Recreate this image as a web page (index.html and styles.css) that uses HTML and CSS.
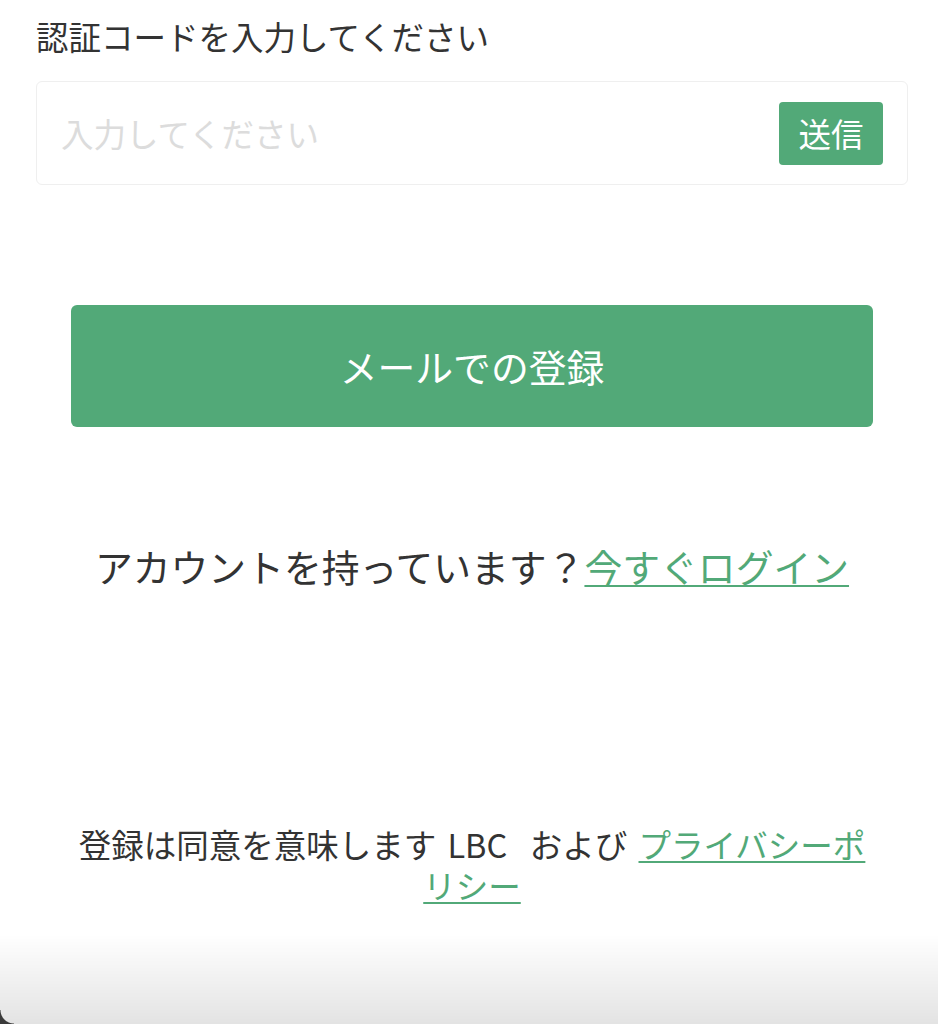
FILE: index.html
```html
<!DOCTYPE html>
<html lang="ja">
<head>
<meta charset="utf-8">
<title>登録</title>
<link rel="stylesheet" href="styles.css">
</head>
<body>
<main class="page">
  <div class="label">認証コードを入力してください</div>
  <div class="code-field">
    <span class="placeholder">入力してください</span>
    <button class="send-btn" type="button">送信</button>
  </div>
  <button class="register-btn" type="button">メールでの登録</button>
  <p class="account">アカウントを持っています？<a class="link" href="#">今すぐログイン </a></p>
  <p class="terms">登録は同意を意味します LBC&nbsp; および <a class="link" href="#">プライバシーポリシー</a></p>
</main>
<div class="bottom-shade"></div>
<div class="corner"></div>
</body>
</html>
```

FILE: styles.css
```css
html, body {
  margin: 0;
  padding: 0;
  background: #ffffff;
}

body {
  font-family: "Noto Sans CJK JP", "Noto Sans", sans-serif;
  color: #333333;
  width: 938px;
  height: 1024px;
  overflow: hidden;
}

.page {
  padding: 0 30px 0 36px;
}

.label {
  margin-top: 12px;
  font-size: 32.5px;
  line-height: 48px;
  color: #333333;
}

.code-field {
  margin-top: 21px;
  height: 104px;
  box-sizing: border-box;
  border: 1px solid #efefef;
  border-radius: 6px;
  display: flex;
  align-items: center;
  justify-content: space-between;
  padding: 0 24px 0 24px;
}

.placeholder {
  font-size: 32.5px;
  line-height: 48px;
  color: #dcdcdc;
}

.send-btn {
  width: 104px;
  height: 63px;
  border: none;
  border-radius: 4px;
  background: #52a978;
  color: #ffffff;
  font-family: inherit;
  font-size: 32.5px;
  line-height: 1;
  padding: 0;
}

.register-btn {
  display: block;
  box-sizing: border-box;
  width: calc(100% - 70px);
  margin: 120px 35px 0 35px;
  height: 122px;
  border: none;
  border-radius: 6px;
  background: #52a978;
  color: #ffffff;
  font-family: inherit;
  font-size: 37.8px;
  line-height: 1;
  padding: 0;
}

.account {
  margin: 114px 0 0 0;
  text-align: center;
  font-size: 37.8px;
  line-height: 50px;
  color: #333333;
}

.link {
  color: #52a978;
  text-decoration: underline;
  text-underline-offset: 3px;
  text-decoration-thickness: 2px;
}

.terms {
  margin: 232px 35px 0 35px;
  text-align: center;
  font-size: 32.5px;
  line-height: 41px;
  word-spacing: 4px;
  color: #333333;
}

.terms .link {
  text-underline-offset: 3px;
}

.bottom-shade {
  position: fixed;
  left: 0;
  right: 0;
  bottom: 0;
  height: 90px;
  background: linear-gradient(to bottom, rgba(0, 0, 0, 0), rgba(0, 0, 0, 0.11));
  pointer-events: none;
}

.corner {
  position: fixed;
  left: 0;
  bottom: 0;
  width: 14px;
  height: 14px;
  background: radial-gradient(circle at 100% 0, rgba(0, 0, 0, 0) 13px, #3a3a3a 14px);
  pointer-events: none;
}
```
